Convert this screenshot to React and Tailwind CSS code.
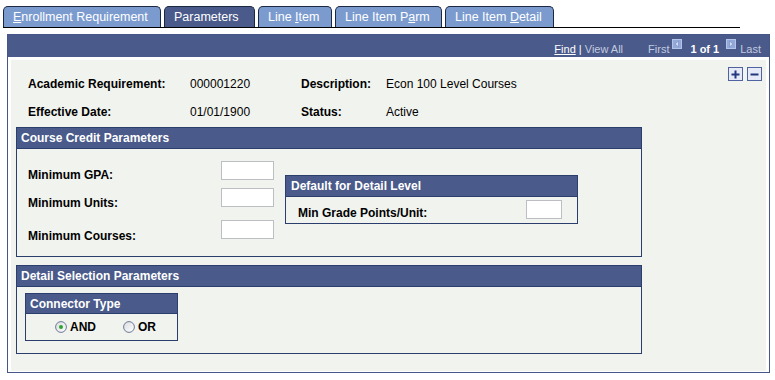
import React from 'react';

const tabs = [
  { key: 'enroll', w: 'w-[158px]', label: <><span className="underline">E</span>nrollment Requirement</> },
  { key: 'params', w: 'w-[91px]', label: 'Parameters', active: true },
  { key: 'line', w: 'w-[74px]', label: <>Line <span className="underline">I</span>tem</> },
  { key: 'parm', w: 'w-[107px]', label: <>Line Item P<span className="underline">a</span>rm</> },
  { key: 'detail', w: 'w-[109px]', label: <>Line Item <span className="underline">D</span>etail</> },
];

function Tab({ tab, last }) {
  const bg = tab.active ? 'bg-[#4a5a8a]' : 'bg-[#7b9bcf]';
  return (
    <div
      className={`${tab.w} ${bg} ${last ? '' : 'mr-[3px]'} h-[21px] rounded-t-[5px] border border-b-0 border-[#1c2740] pl-[9px] flex items-center text-[12.5px] leading-[14px] text-white whitespace-pre`}
    >
      <span>{tab.label}</span>
    </div>
  );
}

function NavIcon({ dir }) {
  return (
    <svg width="10" height="10" viewBox="0 0 10 10" className="block">
      <rect x="0" y="0" width="10" height="10" fill="#93a9d9" />
      <rect x="0.5" y="0.5" width="9" height="9" fill="none" stroke="#b4c4e8" />
      {dir === 'left' ? (
        <polygon points="6.5,2 6.5,8 3,5" fill="#d6def2" stroke="#7088bf" strokeWidth="0.6" />
      ) : (
        <polygon points="3.5,2 3.5,8 7,5" fill="#d6def2" stroke="#7088bf" strokeWidth="0.6" />
      )}
    </svg>
  );
}

function SquareButton({ plus }) {
  return (
    <div className="w-[15px] h-[14px] border border-[#4f63a0] bg-[#e6ebf7] flex items-center justify-center">
      <svg width="11" height="11" viewBox="0 0 11 11">
        <rect x="1.5" y="4.5" width="8" height="2" fill="#233a80" />
        {plus && <rect x="4.5" y="1.5" width="2" height="8" fill="#233a80" />}
      </svg>
    </div>
  );
}

function Radio({ checked }) {
  return (
    <svg width="12" height="12" viewBox="0 0 12 12" className="block">
      <defs>
        <linearGradient id={checked ? 'rg1' : 'rg2'} x1="0" y1="0" x2="1" y2="1">
          <stop offset="0" stopColor="#d9dbe0" />
          <stop offset="1" stopColor="#ffffff" />
        </linearGradient>
      </defs>
      <circle cx="6" cy="6" r="5.4" fill={`url(#${checked ? 'rg1' : 'rg2'})`} stroke="#6c7a94" strokeWidth="1" />
      {checked && <circle cx="6" cy="6" r="2" fill="#2ea52e" />}
    </svg>
  );
}

function Input({ w = 'w-[53px]' }) {
  return <div className={`${w} h-[19px] bg-white border border-[#bcbec4]`} />;
}

// height includes the bottom rule
function BoxHeader({ children, h = 'h-[21px]' }) {
  return (
    <div className={`${h} bg-[#4a5a8a] border-b border-[#2c3e6e] pl-[4px] flex items-center text-white font-bold text-[12px] leading-[14px] whitespace-nowrap`}>
      {children}
    </div>
  );
}

export default function App() {
  return (
    <div className="w-[775px] h-[380px] bg-white pt-[6px] font-[Arial,'Liberation_Sans',sans-serif] text-black overflow-hidden">
      <div className="ml-[3px] w-[737px] border-b border-black flex items-end">
        {tabs.map((t, i) => (
          <Tab key={t.key} tab={t} last={i === tabs.length - 1} />
        ))}
      </div>

      <div className="mt-[6px] ml-[7px] w-[763px] border border-[#46568a] pb-[1px]">
        <div className="h-[22px] bg-[#4a5a8a] flex items-start justify-end pt-[4px] pr-[8px] text-[11px] leading-[13px] whitespace-nowrap">
          <span className="mt-[4px] text-white">
            <span className="underline">Find</span> | <span className="text-[#c3cae0]">View All</span>
          </span>
          <span className="mt-[4px] ml-[25px] text-[#c3cae0]">First</span>
          <span className="ml-[3px]">
            <NavIcon dir="left" />
          </span>
          <span className="mt-[4px] ml-[8px] text-white font-bold">1 of 1</span>
          <span className="ml-[7px]">
            <NavIcon dir="right" />
          </span>
          <span className="mt-[4px] ml-[4px] text-[#c3cae0]">Last</span>
        </div>

        <div className="mt-[3px] ml-[3px] w-[755px] h-[311px] bg-[#f1f3ee] text-[12px] leading-[14px]">
          <div className="flex justify-between items-start">
            <div className="pt-[17px] pl-[17px] grid grid-cols-[162px_111px_85px_auto] gap-y-[14px] whitespace-nowrap">
              <span className="font-bold">Academic Requirement:</span>
              <span>000001220</span>
              <span className="font-bold">Description:</span>
              <span>Econ 100 Level Courses</span>
              <span className="font-bold">Effective Date:</span>
              <span>01/01/1900</span>
              <span className="font-bold">Status:</span>
              <span>Active</span>
            </div>
            <div className="pt-[7px] pr-[4px] flex gap-[4px]">
              <SquareButton plus />
              <SquareButton />
            </div>
          </div>

          <div className="mt-[8px] ml-[5px] w-[626px] border border-[#2c3e6e]">
            <BoxHeader>Course Credit Parameters</BoxHeader>
            <div className="h-[107px] flex items-start">
              <div className="pt-[12px] pl-[11px]">
                <div className="h-[27px] flex items-start">
                  <span className="w-[193px] pt-[7px] font-bold">Minimum GPA:</span>
                  <Input />
                </div>
                <div className="h-[32px] flex items-start">
                  <span className="w-[193px] pt-[8px] font-bold">Minimum Units:</span>
                  <Input />
                </div>
                <div className="h-[19px] flex items-start">
                  <span className="w-[193px] pt-[9px] font-bold">Minimum Courses:</span>
                  <Input />
                </div>
              </div>

              <div className="ml-[11px] mt-[26px] w-[293px] border border-[#2c3e6e]">
                <BoxHeader>
                  <span className="pl-[1px]">Default for Detail Level</span>
                </BoxHeader>
                <div className="h-[26px] flex justify-between items-start pl-[12px] pr-[15px]">
                  <span className="pt-[9px] font-bold">Min Grade Points/Unit:</span>
                  <div className="mt-[3px]">
                    <Input w="w-[36px]" />
                  </div>
                </div>
              </div>
            </div>
          </div>

          <div className="mt-[8px] ml-[5px] w-[626px] border border-[#2c3e6e]">
            <BoxHeader>Detail Selection Parameters</BoxHeader>
            <div className="h-[66px] pt-[6px] pl-[8px]">
              <div className="w-[153px] border border-[#2c3e6e]">
                <BoxHeader h="h-[20px]">Connector Type</BoxHeader>
                <div className="h-[26px] flex items-center pl-[29px] font-bold">
                  <Radio checked />
                  <span className="ml-[3px]">AND</span>
                  <span className="ml-[27px]">
                    <Radio />
                  </span>
                  <span className="ml-[3px]">OR</span>
                </div>
              </div>
            </div>
          </div>
        </div>
      </div>
    </div>
  );
}
